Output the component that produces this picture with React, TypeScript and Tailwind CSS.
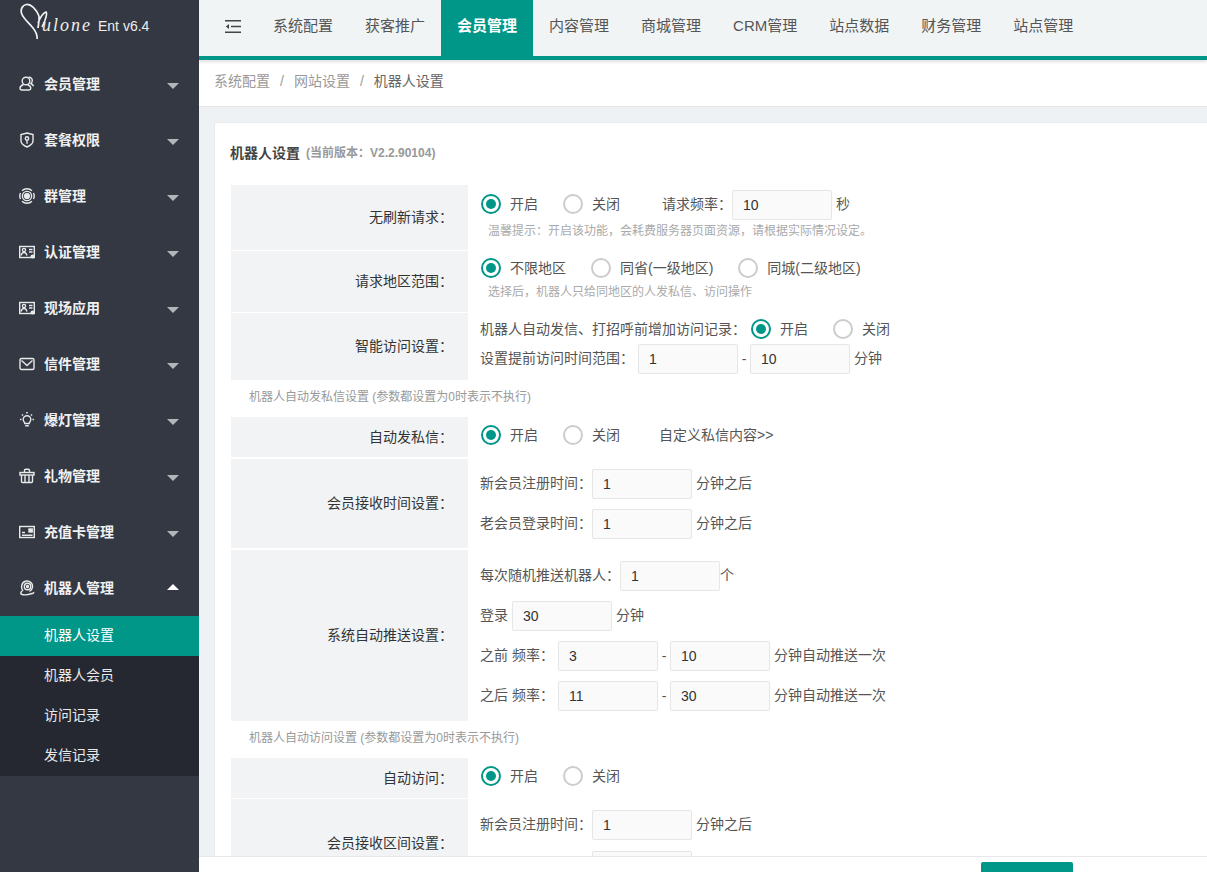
import React from 'react';

const font = 'font-["Liberation_Sans","Noto_Sans_CJK_SC",sans-serif]';

const Stroke: React.FC<{ children: React.ReactNode }> = ({ children }) => (
  <svg viewBox="0 0 16 16" className="w-[16px] h-[16px] shrink-0" fill="none" stroke="#e8e9ea" strokeWidth="1.4">
    {children}
  </svg>
);

const cardIcon = (
  <>
    <rect x="0.7" y="2.5" width="14.6" height="11" />
    <circle cx="5" cy="6" r="1.6" />
    <path d="M2 11.5c.5-2 1.5-3 3-3s2.5 1 3 3M10 5.5h3.5M10 8h3.5" />
    <circle cx="13.5" cy="12.5" r="2" fill="#e8e9ea" stroke="none" />
  </>
);

const menus = [
  {
    name: '会员管理',
    icon: (
      <>
        <circle cx="7" cy="5" r="3.8" />
        <path d="M4.5 8.5C2.5 9.3 1 10.700 1 12.300c0 1 .8 1.700 2 1.700h7c1 0 1.800-.7 1.800-1.700 0-1.600-1.500-3-3.300-3.800" />
        <path d="M9.500 1.300c2.500-.3 4 1.500 3.800 3.500-.1 1-.6 2-1.500 2.700 1.300.6 2.300 1.500 2.700 2.800" />
      </>
    ),
  },
  {
    name: '套餐权限',
    icon: (
      <>
        <path d="M8 1l6 1.500v6.500c0 2.800-3 4.700-6 6-3-1.300-6-3.200-6-6V2.500z" />
        <circle cx="8" cy="6.500" r="1.700" />
        <path d="M8 8.200v3.500" />
      </>
    ),
  },
  {
    name: '群管理',
    icon: (
      <>
        <path d="M3 2.800a7.300 7.300 0 0 1 10 0M3 13.200a7.300 7.300 0 0 0 10 0M.8 8a7.300 7.300 0 0 1 .7-3M15.200 8a7.300 7.300 0 0 0-.7-3M.8 8a7.300 7.300 0 0 0 .7 3M15.200 8a7.300 7.300 0 0 1-.7 3" />
        <circle cx="8" cy="8" r="4.600" />
        <circle cx="8" cy="8" r="2.400" fill="#e8e9ea" />
      </>
    ),
  },
  { name: '认证管理', icon: cardIcon },
  { name: '现场应用', icon: cardIcon },
  {
    name: '信件管理',
    icon: (
      <>
        <rect x="1" y="2.500" width="14" height="11" rx="1.500" />
        <path d="M2.500 4.500L8 9.500l5.500-5" />
      </>
    ),
  },
  {
    name: '爆灯管理',
    icon: (
      <>
        <path d="M5.800 11.500c0-1.500-1.600-2-1.600-4a3.800 3.800 0 0 1 7.600 0c0 2-1.600 2.500-1.600 4z" />
        <path d="M6.200 13.700h3.600M8 0v1.500M1 7.500h1.500M13.500 7.500H15M3 2.500l1 1M13 2.500l-1 1" strokeWidth="1.600" />
      </>
    ),
  },
  {
    name: '礼物管理',
    icon: (
      <>
        <rect x="1" y="4.500" width="14" height="2.500" />
        <path d="M2.500 7v6.500c0 .6.400 1 1 1h9c.6 0 1-.4 1-1V7M6 7v7.500M10 7v7.500M5.500 4.500V2.500c0-.8.500-1.200 1.200-1.200h2.600c.7 0 1.200.4 1.200 1.200v2" />
      </>
    ),
  },
  {
    name: '充值卡管理',
    icon: (
      <>
        <rect x="0.700" y="2.500" width="14.600" height="11" />
        <path d="M3 8.500h3M3 11.300h10.500" />
        <rect x="10" y="5" width="3.200" height="3" fill="#e8e9ea" />
      </>
    ),
  },
];

const subMenus = ['机器人设置', '机器人会员', '访问记录', '发信记录'];
const topTabs = ['系统配置', '获客推广', '会员管理', '内容管理', '商城管理', 'CRM管理', '站点数据', '财务管理', '站点管理'];

const Caret: React.FC<{ up?: boolean }> = ({ up }) => (
  <span
    className={`w-0 h-0 border-x-[6px] border-x-transparent ${
      up ? 'border-b-[6px] border-b-white mb-[3px]' : 'border-t-[6px] border-t-[#b4b5b8] mt-[3px]'
    }`}
  />
);

const Sidebar = () => (
  <aside className="w-[199px] shrink-0 h-full bg-[#333843] text-white">
    <div className="h-[56px] flex items-start pl-[20px]">
      <svg viewBox="0 0 30 40" className="w-[30px] h-[40px] mt-[2px] mr-[-8px] shrink-0" fill="none" stroke="#f2f2f2" strokeWidth="1.700">
        <path d="M19 14C16 7 11 2 6.500 2.500 2.500 3 0 7.500 1.800 12c2 5 7.200 9 11.200 14 3.500 4.500 4.500 8 4 11" />
        <path d="M19 14c.5 4-.5 8-1 12M18 21c2-5 5-10 8-11 1.500 1-.5 9-4 15" />
      </svg>
      <span className='text-[18px] leading-[20px] italic tracking-[2px] text-[#eeeeee] font-["Liberation_Serif",serif] mt-[15px]'>ulone</span>
      <span className="text-[14px] leading-[20px] text-[#eeeeee] ml-[6px] mt-[16px]">Ent v6.4</span>
    </div>
    {menus.map((m) => (
      <div key={m.name} className="h-[56px] flex items-center pl-[19px] pr-[20px]">
        <Stroke>{m.icon}</Stroke>
        <span className="ml-[9px] text-[14px] font-bold flex-1 text-[#f1f1f2]">{m.name}</span>
        <Caret />
      </div>
    ))}
    <div className="h-[56px] flex items-center pl-[19px] pr-[20px]">
      <Stroke>
        <path d="M4 11C1.500 8 2.500 2 6.500 1.200c4-.8 7.500 2 7 6-.3 2-1.500 3.500-3 4.300" />
        <circle cx="8.500" cy="6.500" r="3.200" />
        <circle cx="8.500" cy="6.500" r="1" fill="#e8e9ea" />
        <path d="M3 11c-1 1-1.500 2-1 3 3 1.500 7 1 11-.5 1 0 2-.5 1.500-1.500" />
      </Stroke>
      <span className="ml-[9px] text-[14px] font-bold flex-1 text-[#f1f1f2]">机器人管理</span>
      <Caret up />
    </div>
    <div className="bg-[#252831]">
      {subMenus.map((s, i) => (
        <div key={s} className={`h-[40px] flex items-center pl-[44px] pb-[2px] text-[14px] ${i === 0 ? 'bg-[#009688] text-white' : 'text-[#e9e9ea]'}`}>
          {s}
        </div>
      ))}
    </div>
  </aside>
);

const TopBar = () => (
  <header className="h-[60px] shrink-0 bg-[#f1f4f5] border-b-[4px] border-[#009688] flex items-stretch shadow-[0_2px_3px_rgba(0,0,0,0.12)] relative z-10">
    <div className="w-[58px] flex items-center pl-[26px] pb-[4px]">
      <svg viewBox="0 0 16 13" className="w-[16px] h-[13px]" fill="none" stroke="#444444" strokeWidth="1.400">
        <path d="M0 .7h16M6 6.500h10M0 12.300h16" />
        <path d="M4 4L.8 6.500 4 9z" fill="#444444" stroke="none" />
      </svg>
    </div>
    {topTabs.map((t, i) => (
      <div
        key={t}
        className={`px-[16px] pb-[3px] flex items-center text-[15px] ${i === 2 ? 'bg-[#009688] text-white font-bold' : 'text-[#555555]'}`}
      >
        {t}
      </div>
    ))}
  </header>
);

const Radio: React.FC<{ on?: boolean; label: string; className?: string }> = ({ on, label, className = '' }) => (
  <span className={`inline-flex items-center ${className}`}>
    <span
      className={`w-[20px] h-[20px] rounded-full border-[2px] flex items-center justify-center bg-white ${
        on ? 'border-[#009688]' : 'border-[#cccccc]'
      }`}
    >
      {on && <span className="w-[10px] h-[10px] rounded-full bg-[#009688]" />}
    </span>
    <span className="ml-[9px] text-[14px] text-[#555555] whitespace-nowrap">{label}</span>
  </span>
);

const Input: React.FC<{ value: string; className?: string }> = ({ value, className = '' }) => (
  <span
    className={`inline-flex items-center w-[100px] h-[30px] pl-[10px] border border-[#e6e6e6] rounded-[2px] bg-[#fafafa] text-[14px] text-[#333333] ${className}`}
  >
    {value}
  </span>
);

// labels beside the inputs sit a pixel above the box centre
const Lbl: React.FC<{ className?: string; children: React.ReactNode }> = ({ className = '', children }) => (
  <span className={`mb-[2px] ${className}`}>{children}</span>
);

const Dash = () => <span className="w-[12px] text-center">-</span>;

const Row: React.FC<{ label: string; h: string; mb?: string; children: React.ReactNode }> = ({ label, h, mb = 'mb-[1px]', children }) => (
  <div className={`flex ${h} ${mb}`}>
    <div className="w-[237px] shrink-0 bg-[#f2f3f5] flex items-center justify-end pr-[15px] text-[14px] text-[#333333]">{label}：</div>
    <div className="pl-[12px] flex-1 min-w-0 text-[14px] text-[#555555] whitespace-nowrap">{children}</div>
  </div>
);

const Line: React.FC<{ className?: string; children: React.ReactNode }> = ({ className = '', children }) => (
  <div className={`flex items-center ${className}`}>{children}</div>
);

const Note: React.FC<{ children: React.ReactNode }> = ({ children }) => (
  <div className="h-[37px] pl-[18px] pb-[4px] flex items-center text-[12px] text-[#999999]">{children}</div>
);

const Hint: React.FC<{ children: React.ReactNode }> = ({ children }) => (
  <div className="pl-[8px] text-[12px] leading-[16px] text-[#aaaaaa]">{children}</div>
);

const Form = () => (
  <div className="pl-[16px]">
    <Row label="无刷新请求" h="h-[65px]">
      <Line className="h-[30px] mt-[5px] pl-[1px]">
        <Radio on label="开启" className="mb-[2px]" />
        <Radio label="关闭" className="ml-[25px] mb-[2px]" />
        <Lbl className="ml-[42px]">请求频率：</Lbl>
        <Input value="10" />
        <Lbl className="ml-[4px]">秒</Lbl>
      </Line>
      <div className="mt-[3px]">
        <Hint>温馨提示：开启该功能，会耗费服务器页面资源，请根据实际情况设定。</Hint>
      </div>
    </Row>
    <Row label="请求地区范围" h="h-[61px]">
      <Line className="h-[20px] mt-[7px] pl-[1px]">
        <Radio on label="不限地区" />
        <Radio label="同省(一级地区)" className="ml-[25px]" />
        <Radio label="同城(二级地区)" className="ml-[25px]" />
      </Line>
      <div className="mt-[6px]">
        <Hint>选择后，机器人只给同地区的人发私信、访问操作</Hint>
      </div>
    </Row>
    <Row label="智能访问设置" h="h-[67px]" mb="mb-0">
      <Line className="h-[20px] mt-[6px]">
        <span>机器人自动发信、打招呼前增加访问记录：</span>
        <Radio on label="开启" className="ml-[5px]" />
        <Radio label="关闭" className="ml-[25px]" />
      </Line>
      <Line className="h-[30px] mt-[5px]">
        <Lbl>设置提前访问时间范围：</Lbl>
        <Input value="1" className="ml-[4px]" />
        <Dash />
        <Input value="10" />
        <Lbl className="ml-[4px]">分钟</Lbl>
      </Line>
    </Row>
    <Note>机器人自动发私信设置 (参数都设置为0时表示不执行)</Note>
    <Row label="自动发私信" h="h-[40px]" mb="mb-[2px]">
      <Line className="h-[20px] mt-[8px] pl-[1px]">
        <Radio on label="开启" />
        <Radio label="关闭" className="ml-[25px]" />
        <span className="ml-[39px]">自定义私信内容&gt;&gt;</span>
      </Line>
    </Row>
    <Row label="会员接收时间设置" h="h-[89px]" mb="mb-[2px]">
      <Line className="h-[30px] mt-[10px]">
        <Lbl>新会员注册时间：</Lbl>
        <Input value="1" />
        <Lbl className="ml-[4px]">分钟之后</Lbl>
      </Line>
      <Line className="h-[30px] mt-[10px]">
        <Lbl>老会员登录时间：</Lbl>
        <Input value="1" />
        <Lbl className="ml-[4px]">分钟之后</Lbl>
      </Line>
    </Row>
    <Row label="系统自动推送设置" h="h-[171px]" mb="mb-0">
      <Line className="h-[30px] mt-[11px]">
        <Lbl>每次随机推送机器人：</Lbl>
        <Input value="1" />
        <Lbl>个</Lbl>
      </Line>
      <Line className="h-[30px] mt-[10px]">
        <Lbl>登录</Lbl>
        <Input value="30" className="ml-[4px]" />
        <Lbl className="ml-[4px]">分钟</Lbl>
      </Line>
      <Line className="h-[30px] mt-[10px]">
        <Lbl className="w-[78px]">之前 频率：</Lbl>
        <Input value="3" />
        <Dash />
        <Input value="10" />
        <Lbl className="ml-[4px]">分钟自动推送一次</Lbl>
      </Line>
      <Line className="h-[30px] mt-[10px]">
        <Lbl className="w-[78px]">之后 频率：</Lbl>
        <Input value="11" />
        <Dash />
        <Input value="30" />
        <Lbl className="ml-[4px]">分钟自动推送一次</Lbl>
      </Line>
    </Row>
    <Note>机器人自动访问设置 (参数都设置为0时表示不执行)</Note>
    <Row label="自动访问" h="h-[40px]">
      <Line className="h-[20px] mt-[8px] pl-[1px]">
        <Radio on label="开启" />
        <Radio label="关闭" className="ml-[25px]" />
      </Line>
    </Row>
    <Row label="会员接收区间设置" h="h-[89px]">
      <Line className="h-[30px] mt-[11px]">
        <Lbl>新会员注册时间：</Lbl>
        <Input value="1" />
        <Lbl className="ml-[4px]">分钟之后</Lbl>
      </Line>
      <Line className="h-[30px] mt-[11px]">
        <Lbl>老会员登录时间：</Lbl>
        <Input value="1" />
        <Lbl className="ml-[4px]">分钟之后</Lbl>
      </Line>
    </Row>
  </div>
);

export default function App() {
  return (
    <div className={`${font} w-[1207px] h-[872px] overflow-hidden flex bg-[#eff2f4]`}>
      <Sidebar />
      <main className="flex-1 min-w-0 flex flex-col relative">
        <TopBar />
        <div className="h-[47px] shrink-0 bg-white border-b border-[#e6e6e6] flex items-center pl-[15px] pb-[4px] text-[14px] text-[#999999]">
          <span>系统配置</span>
          <span className="mx-[10px]">/</span>
          <span>网站设置</span>
          <span className="mx-[10px]">/</span>
          <span className="text-[#666666]">机器人设置</span>
        </div>
        <div className="flex-1 min-h-0 overflow-hidden pt-[15px] pl-[15px]">
          <div className="bg-white border border-[#e9ecee] rounded-[2px] w-[1100px] h-[900px]">
            <div className="h-[62px] pl-[15px] pb-[2px] flex items-center text-[14px] font-bold text-[#444444]">
              机器人设置
              <span className="ml-[6px] text-[12px] text-[#999999]">(当前版本：V2.2.90104)</span>
            </div>
            <Form />
          </div>
        </div>
        <div className="absolute left-0 right-0 bottom-0 h-[16px] bg-white border-t border-[#e8e8e8] pl-[782px] pt-[5px] overflow-hidden">
          <div className="w-[92px] h-[20px] bg-[#009688] rounded-[2px]" />
        </div>
      </main>
    </div>
  );
}
